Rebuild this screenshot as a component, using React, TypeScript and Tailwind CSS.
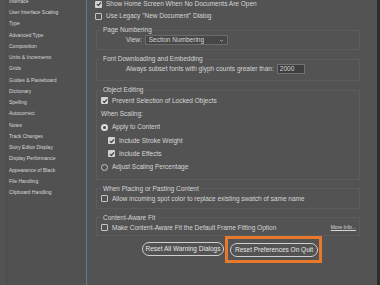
const navItems = [
  "Interface",
  "User Interface Scaling",
  "Type",
  "Advanced Type",
  "Composition",
  "Units & Increments",
  "Grids",
  "Guides & Pasteboard",
  "Dictionary",
  "Spelling",
  "Autocorrect",
  "Notes",
  "Track Changes",
  "Story Editor Display",
  "Display Performance",
  "Appearance of Black",
  "File Handling",
  "Clipboard Handling",
];

function Check({ on }: { on?: boolean }) {
  if (on) {
    return (
      <span className="flex items-center justify-center w-[7px] h-[7px] shrink-0 rounded-[1px] bg-[#d2d2d2]">
        <svg viewBox="0 0 8 8" className="w-[6px] h-[6px]" fill="none" stroke="#3a3a3a" strokeWidth="1.6">
          <polyline points="1.2 4.2 3.2 6 6.8 1.8" />
        </svg>
      </span>
    );
  }
  return <span className="w-[7px] h-[7px] shrink-0 rounded-[1px] border border-[#c4c4c4]" />;
}

function Radio({ on }: { on?: boolean }) {
  if (on) {
    return (
      <span className="flex items-center justify-center w-[7px] h-[7px] shrink-0 rounded-full bg-[#dcdcdc]">
        <span className="w-[3px] h-[3px] rounded-full bg-[#4a4a4a]" />
      </span>
    );
  }
  return <span className="w-[7px] h-[7px] shrink-0 rounded-full border border-[#c4c4c4]" />;
}

function Group({ title, className, children }: { title: string; className: string; children: React.ReactNode }) {
  return (
    <fieldset className={`border border-[#5c5c5c] mr-[17px] ml-[1px] ${className}`}>
      <legend className="ml-[4px] px-[2px] leading-[8px]">{title}</legend>
      {children}
    </fieldset>
  );
}

export default function App() {
  return (
    <div
      className="w-[380px] h-[285px] overflow-hidden flex bg-[#535353] text-[#d6d6d6] text-[6.5px]"
      style={{ fontFamily: '"Liberation Sans", Arial, sans-serif' }}
    >
      {/* category list */}
      <div className="w-[87px] shrink-0 pl-[6px] flex">
        <div className="flex-1 border-l border-l-[#4a4a4a] border-r border-r-[#5d7f93] bg-[#515151] text-[5px] text-[#d8d8d8]">
          <ul className="-mt-[4px]">
            {navItems.map((n) => (
              <li key={n} className="h-[11.25px] flex items-center pl-[2px]">
                {n}
              </li>
            ))}
          </ul>
        </div>
      </div>

      {/* preferences */}
      <div className="flex-1 pl-[8px] flex flex-col -mt-[2px]">
        <div className="h-[12px] flex items-center gap-[4px]">
          <Check on />
          <span>Show Home Screen When No Documents Are Open</span>
        </div>
        <div className="h-[12px] flex items-center gap-[4px]">
          <Check />
          <span>Use Legacy "New Document" Dialog</span>
        </div>

        <Group title="Page Numbering" className="mt-[4px] pb-[3px]">
          <div className="h-[12px] flex items-center pl-[29px] gap-[3px]">
            <span>View:</span>
            <div className="w-[83px] h-[10px] border border-[#6c6c6c] bg-[#474747] flex items-center justify-between px-[3px]">
              <span>Section Numbering</span>
              <svg viewBox="0 0 8 8" className="w-[5px] h-[5px]" fill="none" stroke="#cfcfcf" strokeWidth="1">
                <polyline points="1.5 3 4 5.5 6.5 3" />
              </svg>
            </div>
          </div>
        </Group>

        <Group title="Font Downloading and Embedding" className="mt-[5px] pb-[6px]">
          <div className="h-[11px] flex items-center pl-[29px] gap-[3px]">
            <span>Always subset fonts with glyph counts greater than:</span>
            <div className="w-[28px] h-[10px] border border-[#727272] bg-[#3e3e3e] flex items-center px-[2px]">2000</div>
          </div>
        </Group>

        <Group title="Object Editing" className="mt-[5px] pb-[5px]">
          <div className="pl-[4px]">
            <div className="h-[13.3px] flex items-center gap-[4px]">
              <Check on />
              <span>Prevent Selection of Locked Objects</span>
            </div>
            <div className="h-[13.3px] flex items-center">When Scaling:</div>
            <div className="h-[13.3px] flex items-center gap-[4px]">
              <Radio on />
              <span>Apply to Content</span>
            </div>
            <div className="h-[13.3px] flex items-center gap-[4px] pl-[7px]">
              <Check on />
              <span>Include Stroke Weight</span>
            </div>
            <div className="h-[13.3px] flex items-center gap-[4px] pl-[7px]">
              <Check on />
              <span>Include Effects</span>
            </div>
            <div className="h-[13.3px] flex items-center gap-[4px]">
              <Radio />
              <span>Adjust Scaling Percentage</span>
            </div>
          </div>
        </Group>

        <Group title="When Placing or Pasting Content" className="mt-[5px] pb-[3px]">
          <div className="h-[12px] flex items-center gap-[4px] pl-[4px]">
            <Check />
            <span>Allow incoming spot color to replace existing swatch of same name</span>
          </div>
        </Group>

        <Group title="Content-Aware Fit" className="mt-[5px] pb-[1px]">
          <div className="h-[12px] flex items-center gap-[4px] pl-[4px] pr-[3px]">
            <Check />
            <span className="flex-1">Make Content-Aware Fit the Default Frame Fitting Option</span>
            <span className="text-[5px] underline">More Info...</span>
          </div>
        </Group>

        <div className="flex items-center pl-[47px] gap-[1px]">
          <button className="w-[82px] h-[14px] rounded-full border border-[#cfcfcf] text-[#e6e6e6]">
            Reset All Warning Dialogs
          </button>
          <div className="border-[3px] border-[#e8792b] pl-[2px] pr-[1px] pt-[4px] pb-[3px]">
            <button className="w-[88px] h-[14px] rounded-full border border-[#cfcfcf] text-[#e6e6e6]">
              Reset Preferences On Quit
            </button>
          </div>
        </div>
      </div>

      <div className="w-[3px] shrink-0 bg-[#2c2c2c]" />
    </div>
  );
}
